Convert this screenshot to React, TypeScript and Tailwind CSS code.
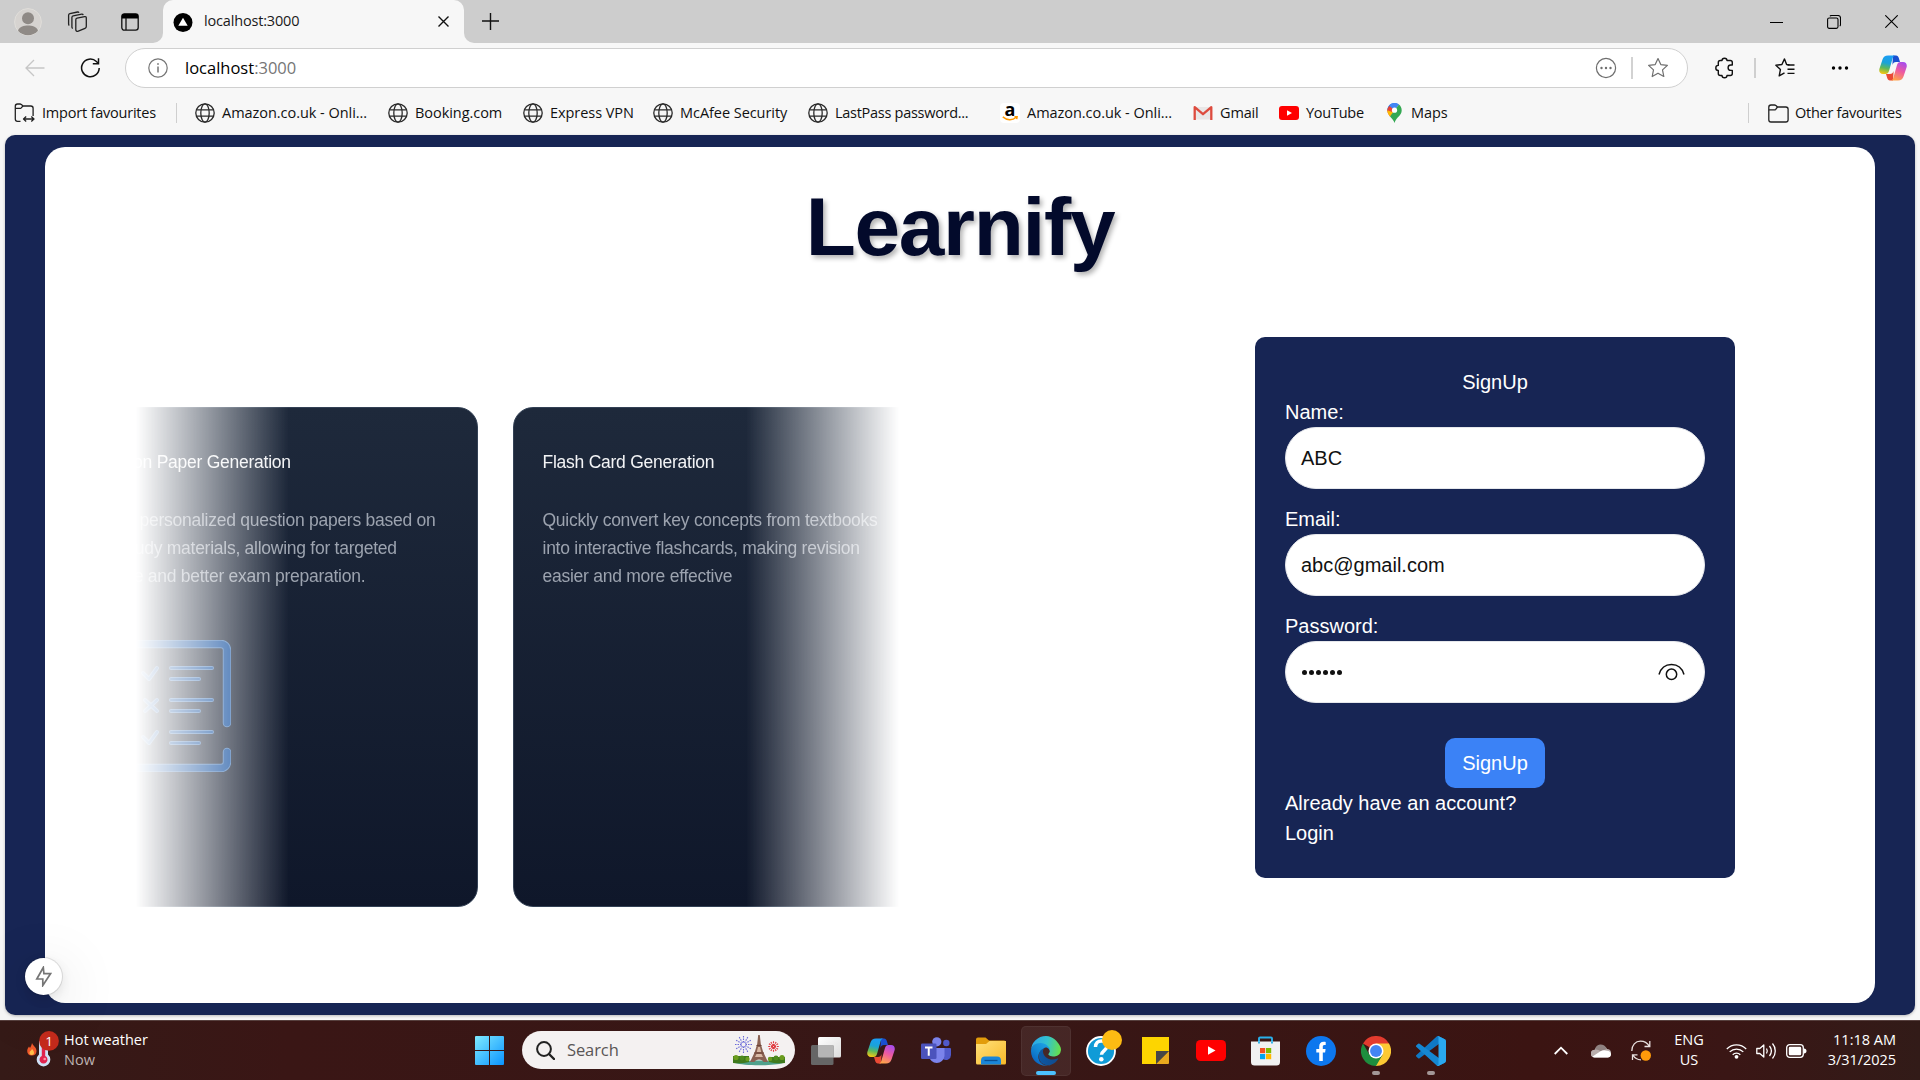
import type { ReactNode } from "react";

const ui = "font-['Open_Sans','Noto_Sans',sans-serif]";

/* ---------- shared drawings ---------- */

function Globe() {
  return (
    <svg width="20" height="20" viewBox="0 0 20 20" fill="none" stroke="#2a2a2a" strokeWidth="1.3">
      <circle cx="10" cy="10" r="9.200" />
      <ellipse cx="10" cy="10" rx="4.200" ry="9.200" />
      <path d="M1.600 6.800h16.800M1.600 13.200h16.800" />
    </svg>
  );
}

function Copilot({ id }: { id: string }) {
  return (
    <svg width="28" height="26" viewBox="0 0 28 26">
      <defs>
        <linearGradient id={id + "a"} x1="0.5" y1="0" x2="0.3" y2="1">
          <stop offset="0" stopColor="#1b9df5" />
          <stop offset=".4" stopColor="#1aa3d8" />
          <stop offset=".68" stopColor="#5cb85c" />
          <stop offset="1" stopColor="#f6c712" />
        </linearGradient>
        <linearGradient id={id + "b"} x1="0.8" y1="0" x2="0.4" y2="1">
          <stop offset="0" stopColor="#a44cf0" />
          <stop offset=".5" stopColor="#ee5aa0" />
          <stop offset="1" stopColor="#ffa24c" />
        </linearGradient>
      </defs>
      <path d="M14 .5h3c1.600 0 2.300 1 2.800 2.500L21 7h-4c-2 0-3 1-3.600 3z" fill="#1a4fd0" />
      <path d="M14 25.500h-3c-1.600 0-2.300-1-2.800-2.500L7 19h4c2 0 3-1 3.600-3z" fill="#ea4a35" />
      <path d="M9 .5h7.500c-1.500 0-2.300 1-2.800 2.500L10 16c-.6 2-1.600 3-3.500 3H4c-3.200 0-4.400-2.500-3.500-5.500l3-9C4.400 1.900 6 .5 9 .5z" fill={`url(#${id}a)`} />
      <path d="M19 25.500h-7.500c1.500 0 2.300-1 2.800-2.500L18 10c.6-2 1.600-3 3.500-3H24c3.200 0 4.400 2.500 3.500 5.500l-3 9c-.9 2.600-2.500 4-5.500 4z" fill={`url(#${id}b)`} />
    </svg>
  );
}

/* ---------- browser chrome ---------- */

function TabStrip() {
  return (
    <div className="flex h-[43px] bg-[#f7f7f7]">
      <div className="flex w-[163px] items-center rounded-br-[10px] bg-[#cdcdcd] pl-[14px]">
        <svg width="28" height="28" viewBox="0 0 28 28">
          <circle cx="14" cy="14" r="13.400" fill="#d6d3d0" stroke="#e0deda" />
          <circle cx="14" cy="10.200" r="6" fill="#8f8a86" />
          <path d="M4 22.800c1.500-4.500 6-5.300 10-5.300s8.500.8 10 5.300a13.400 13.400 0 0 1-20 0z" fill="#8f8a86" />
        </svg>
        <svg className="ml-[25px]" width="21" height="22" viewBox="0 0 20 22" fill="none" stroke="#222" strokeWidth="1.300" strokeLinejoin="round">
          <path d="M8.300 8.800c0-1 .5-1.500 1.300-1.700l7.500-1.500c1-.2 1.700.4 1.700 1.400v8.500c0 1-.4 1.600-1.300 1.900l-6.700 2.800c-1.300.5-2.500-.2-2.500-1.500z" />
          <path d="M5.300 17.500c-.7-.3-.9-.8-.9-1.500V6.600c0-1 .5-1.500 1.300-1.700l8.500-1.700c.8-.1 1.300.2 1.500.9" />
          <path d="M1.800 14.500c-.5-.3-.7-.8-.7-1.500V4.300c0-1 .5-1.500 1.300-1.700L10 1c.7-.1 1.200.1 1.500.7" />
        </svg>
        <svg className="ml-[33px]" width="18" height="18" viewBox="0 0 18 18">
          <rect x=".8" y=".8" width="16.400" height="16.400" rx="2.600" fill="none" stroke="#111" strokeWidth="1.300" />
          <path d="M.8 5.500V3.200C.8 1.800 1.800.8 3.200.8h11.600c1.400 0 2.400 1 2.400 2.400v2.300z" fill="#000" />
          <path d="M5 5v12" stroke="#111" strokeWidth="1.300" />
        </svg>
      </div>
      <div className="w-[301px] bg-[#cdcdcd]">
        <div className="flex h-full items-center rounded-t-[10px] bg-[#f7f7f7] pl-[10px]">
          <svg width="20" height="20" viewBox="0 0 20 20">
            <circle cx="10" cy="10.500" r="9.500" fill="#000" />
            <path d="M10 5.700l4.700 8H5.300z" fill="#fff" />
          </svg>
          <span className={`${ui} ml-[11px] w-[190px] pb-px text-[14.500px] leading-5 tracking-[-0.17px] text-[#1a1a1a]`}>localhost:3000</span>
          <svg className="ml-[44px]" width="11" height="11" viewBox="0 0 11 11" stroke="#111" strokeWidth="1.400">
            <path d="M.5.500l10 10M10.500.500l-10 10" />
          </svg>
        </div>
      </div>
      <div className="flex flex-1 items-center rounded-bl-[10px] bg-[#cdcdcd] pl-[18px] pr-[22px]">
        <svg width="17" height="17" viewBox="0 0 17 17" stroke="#111" strokeWidth="1.400">
          <path d="M0 8h17M8.500 0v17" />
        </svg>
        <div className="flex-1" />
        <svg width="13" height="14" viewBox="0 0 13 14">
          <path d="M0 7.500h13" stroke="#000" />
        </svg>
        <svg className="ml-[44px]" width="14" height="14" viewBox="0 0 14 14" fill="none" stroke="#000" strokeWidth="1.100">
          <rect x=".6" y="3" width="10.400" height="10.400" rx="1.600" />
          <path d="M3 1.200C3.300.700 3.800.5 4.500.5H11c1.700 0 2.500.8 2.500 2.500v6.500c0 .8-.2 1.300-.8 1.600" />
        </svg>
        <svg className="ml-[44px]" width="13" height="13" viewBox="0 0 13 13" stroke="#000" strokeWidth="1.100">
          <path d="M.3.300l12.400 12.400M12.700.300L.3 12.700" />
        </svg>
      </div>
    </div>
  );
}

function AddressRow() {
  return (
    <div className="flex h-[50px] items-center">
      <svg className="ml-[25px]" width="20" height="18" viewBox="0 0 20 18" fill="none" stroke="#c6c6c6" strokeWidth="1.300">
        <path d="M19.500 9H1M9 1L1 9l8 8" />
      </svg>
      <svg className="ml-[35px]" width="21" height="20" viewBox="0 0 20 20" fill="none" stroke="#111" strokeWidth="1.500">
        <path d="M18.700 10a8.800 8.800 0 1 1-2.800-6.500L17.700 5.200" />
        <path d="M18 .2v5.600h-5.700" />
      </svg>
      <div className="ml-[24px] flex h-[40px] w-[1563px] items-center rounded-full border border-[#d0d0d0] bg-white">
        <svg className="ml-[22px]" width="20" height="20" viewBox="0 0 20 20" fill="none" stroke="#757575" strokeWidth="1.200">
          <circle cx="10" cy="10" r="9.200" />
          <path d="M10 8.500v6" strokeWidth="1.500" />
          <path d="M10 5.200v1.600" strokeWidth="1.700" />
        </svg>
        <span className={`${ui} ml-[17px] pb-px text-[16.500px] leading-6 text-black`}>
          localhost<span className="text-[#767676]">:3000</span>
        </span>
        <div className="flex-1" />
        <svg width="22" height="22" viewBox="0 0 22 22" fill="none" stroke="#6e6e6e" strokeWidth="1.200">
          <circle cx="11" cy="11" r="9.600" />
          <g fill="#6e6e6e" stroke="none">
            <circle cx="6.500" cy="11" r="1.200" />
            <circle cx="11" cy="11" r="1.200" />
            <circle cx="15.500" cy="11" r="1.200" />
          </g>
        </svg>
        <div className="ml-[14px] h-[22px] w-[2px] bg-[#d2d2d2]" />
        <svg className="ml-[14px] mr-[18px]" width="22" height="22" viewBox="0 0 22 22" fill="none" stroke="#6e6e6e" strokeWidth="1.200" strokeLinejoin="round">
          <path d="M11 1.500l2.800 6.100 6.600.8-4.900 4.500 1.300 6.600L11 16.200l-5.800 3.300 1.300-6.600L1.600 8.400l6.600-.8z" />
        </svg>
      </div>
      <svg className="ml-[27px]" width="19" height="22" viewBox="0 0 19 22" fill="none" stroke="#111" strokeWidth="1.400" strokeLinejoin="round">
        <path d="M7 3.500C7 2.200 8.100 1.300 9.500 1.300s2.500.9 2.500 2.200h3.300c1.200 0 2 .8 2 2V8h-1.500a2.600 2.600 0 0 0 0 5.400h1.500v3.100c0 1.200-.8 2-2 2H12c0 1.300-1.100 2.200-2.500 2.200S7 19.800 7 18.500H5.300c-1.200 0-2-.8-2-2v-3C1.800 13.500.8 12.300.8 11S1.800 8.400 3.300 8.400V5.500c0-1.200.8-2 2-2z" />
      </svg>
      <div className="ml-[20px] h-[20px] w-[2px] bg-[#cfcfcf]" />
      <svg className="ml-[18px]" width="22" height="22" viewBox="0 0 22 22" fill="none" stroke="#111" strokeWidth="1.400" strokeLinejoin="round">
        <path d="M15.500 7.800l-2.900-.3L10.500 1.900 7.900 7.500l-6 .8 4.500 4.300-1.200 6.300 5.300-3" />
        <path d="M13.500 8h7M13.500 12.200h7M13.500 16.400h7" />
      </svg>
      <svg className="ml-[35px]" width="18" height="6" viewBox="0 0 18 6">
        <circle cx="2.500" cy="3" r="1.700" />
        <circle cx="9" cy="3" r="1.700" />
        <circle cx="15.500" cy="3" r="1.700" />
      </svg>
      <div className="ml-[30px]"><Copilot id="top" /></div>
    </div>
  );
}

function Bookmark({ icon, label, width, tracking }: { icon: ReactNode; label: string; width: string; tracking: string }) {
  return (
    <div className={`flex shrink-0 items-center ${width}`}>
      <span className="flex w-[20px] justify-center">{icon}</span>
      <span className={`${ui} ml-[7px] whitespace-nowrap text-[14.500px] leading-5 text-[#111] ${tracking}`}>{label}</span>
    </div>
  );
}

function AmazonMark() {
  return (
    <span className="flex h-[20px] w-[20px] flex-col items-center rounded-[4px] bg-white">
      <span className="font-['Open_Sans',sans-serif] text-[18px] font-bold leading-[13px] text-black">a</span>
      <svg width="16" height="5" viewBox="0 0 16 5" fill="none" stroke="#ff9900" strokeWidth="1.500">
        <path d="M.8.900C5 4.500 10.500 4.500 14.300 1.300M12.500.800l2.600-.1-.4 2.500" />
      </svg>
    </span>
  );
}

function GmailMark() {
  return (
    <svg width="20" height="16" viewBox="0 0 20 16">
      <path d="M2 2h16v12.500H2z" fill="#e9e7e7" />
      <path d="M1.700 15V2.200L10 9.200l8.300-7V15" fill="none" stroke="#dd4b3e" strokeWidth="2.300" strokeLinejoin="round" />
    </svg>
  );
}

function YouTubeMark({ w, h }: { w: number; h: number }) {
  return (
    <svg width={w} height={h} viewBox="0 0 30 21">
      <rect width="30" height="21" rx="4.500" fill="#f00" />
      <path d="M12 6.300l7.500 4.200-7.500 4.200z" fill="#fff" />
    </svg>
  );
}

function MapsMark() {
  return (
    <svg width="15" height="20" viewBox="0 0 15 20">
      <path d="M7.500 0C3.400 0 .3 3.200.3 7.200l3.900 4.500L11.800 1.500C10.600.5 9.200 0 7.500 0z" fill="#1a73e8" />
      <path d="M.3 7.200C.3 9.800 1.600 11.600 3 13.400l6.200-7.500L3.500 2.200C1.600 3.500.3 5 .3 7.200z" fill="#ea4335" />
      <path d="M7.500 0c1.800 0 3.200.6 4.400 1.500L7.300 7 2.200 2.800C3.500 1 5.300 0 7.500 0z" fill="#4285f4" />
      <path d="M.3 7.300c0 2.300 1.200 4.300 2.700 6.100l6.500-7.600-2 4z" fill="#fbbc04" />
      <path d="M11.900 1.500c1.700 1.300 2.800 3.400 2.800 5.700 0 5.500-5.500 6.800-7.200 12.800-.8-3-2.700-4.500-4.500-6.600z" fill="#34a853" />
      <circle cx="7.500" cy="7.200" r="2.600" fill="#fff" />
    </svg>
  );
}

function FolderOutline() {
  return (
    <svg width="21" height="19" viewBox="0 0 21 19" fill="none" stroke="#222" strokeWidth="1.300" strokeLinejoin="round">
      <path d="M.8 3.200C.8 1.800 1.600 1 3 1h3.500c.6 0 1 .2 1.400.6L9.500 3h8.300c1.400 0 2.300.8 2.300 2.200v10.500c0 1.400-.9 2.300-2.300 2.300H3c-1.400 0-2.200-.9-2.200-2.300z" />
      <path d="M.8 5.900h5.500c.6 0 1-.2 1.400-.5L9.500 3" />
    </svg>
  );
}

function BookmarkRow() {
  return (
    <div className="flex h-[42px] items-center pb-[2px] pl-[14px]">
      <div className="flex w-[162px] items-center">
        <svg width="22" height="20" viewBox="0 0 21 20" fill="none" stroke="#222" strokeWidth="1.300" strokeLinejoin="round">
          <path d="M6 18.300H3c-1.400 0-2.200-.9-2.200-2.300V3.200C.8 1.800 1.600 1 3 1h2.500c.6 0 1 .2 1.400.6L8.500 3h7.800c1.400 0 2.300.8 2.300 2.200V13" />
          <path d="M.8 5.400h4.500c.6 0 1-.2 1.400-.5L8.500 3M9.500 16h9.500M11.700 13.500L9 16l2.700 2.500M16.800 13.500l2.700 2.500-2.700 2.500" />
        </svg>
        <span className={`${ui} ml-[6px] whitespace-nowrap text-[14.500px] leading-5 tracking-[-0.21px] text-[#111]`}>Import favourites</span>
      </div>
      <div className="mr-[18px] h-[20px] w-px bg-[#cfcfcf]" />
      <Bookmark icon={<Globe />} label="Amazon.co.uk - Onli..." width="w-[193px]" tracking="tracking-[-0.04px]" />
      <Bookmark icon={<Globe />} label="Booking.com" width="w-[135px]" tracking="tracking-[-0.05px]" />
      <Bookmark icon={<Globe />} label="Express VPN" width="w-[130px]" tracking="tracking-[-0.05px]" />
      <Bookmark icon={<Globe />} label="McAfee Security" width="w-[155px]" tracking="tracking-[-0.05px]" />
      <Bookmark icon={<Globe />} label="LastPass password..." width="w-[192px]" tracking="tracking-[-0.28px]" />
      <Bookmark icon={<AmazonMark />} label="Amazon.co.uk - Onli..." width="w-[193px]" tracking="tracking-[-0.04px]" />
      <Bookmark icon={<GmailMark />} label="Gmail" width="w-[86px]" tracking="tracking-[-0.15px]" />
      <Bookmark icon={<YouTubeMark w={20} h={14} />} label="YouTube" width="w-[105px]" tracking="tracking-[-0.25px]" />
      <Bookmark icon={<MapsMark />} label="Maps" width="w-[100px]" tracking="tracking-[-0.1px]" />
      <div className="flex-1" />
      <div className="h-[20px] w-px bg-[#cfcfcf]" />
      <div className="ml-[19px] flex w-[152px] items-center">
        <FolderOutline />
        <span className={`${ui} ml-[6px] whitespace-nowrap text-[14.500px] leading-5 tracking-[-0.26px] text-[#111]`}>Other favourites</span>
      </div>
    </div>
  );
}

/* ---------- page content ---------- */

const paperFrame = "M128 83V10a6 6 0 0 0-6-6H10a6 6 0 0 0-6 6v112a6 6 0 0 0 6 6h112a6 6 0 0 0 6-6v-10";
const paperRows = "M72 28h41M72 39h28M72 60h41M72 71h28M72 92h41M72 103h28M44 33l6 6 8-11M46 60l12 11M58 60L46 71M44 97l6 6 8-11";

function PaperIcon() {
  return (
    <svg width="132" height="132" viewBox="0 0 132 132" fill="none" strokeLinecap="round" strokeLinejoin="round">
      <g stroke="#4478b8">
        <path d={paperFrame} strokeWidth="8.500" />
        <path d={paperRows} strokeWidth="4" />
      </g>
      <g stroke="#054599">
        <path d={paperFrame} strokeWidth="6.500" />
        <path d={paperRows} strokeWidth="2.200" />
      </g>
    </svg>
  );
}

function FeatureCard({ title, lines, children }: { title: string; lines: string[]; children?: ReactNode }) {
  return (
    <div className="h-[500px] w-[424px] shrink-0 rounded-[20px] border border-[#334155] bg-[linear-gradient(180deg,#1e293b,#0f172a)] px-[29px] py-[40px] text-[17.500px] leading-[28px]">
      <div className="whitespace-nowrap tracking-[-0.25px] text-[#f3f4f6]">{title}</div>
      <div className="mt-[30px] tracking-[-0.26px] text-[#9ca3af]">
        {lines.map((l) => (
          <div key={l} className="whitespace-nowrap">{l}</div>
        ))}
      </div>
      {children}
    </div>
  );
}

function Cards() {
  return (
    <div className="flex w-[763px] justify-start overflow-hidden [mask-image:linear-gradient(to_right,transparent,#fff_20%,#fff_80%,transparent)]">
      <div className="ml-[-82px] flex gap-[34.5px]">
        <FeatureCard
          title="Question Paper Generation"
          lines={["Create personalized question papers based on", "your study materials, allowing for targeted", "practice and better exam preparation."]}
        >
          <div className="ml-[15px] mt-[50px]"><PaperIcon /></div>
        </FeatureCard>
        <FeatureCard
          title="Flash Card Generation"
          lines={["Quickly convert key concepts from textbooks", "into interactive flashcards, making revision", "easier and more effective"]}
        />
      </div>
    </div>
  );
}

function Field({ label, children }: { label: string; children: ReactNode }) {
  return (
    <div>
      <div>{label}</div>
      <div className="flex h-[62px] items-center rounded-full border border-[#e5e7eb] bg-white px-[15px] text-[#111]">{children}</div>
    </div>
  );
}

function SignUpForm() {
  return (
    <div className="flex w-[480px] flex-col rounded-[10px] bg-[#172554] p-[30px] text-[20px] leading-[30px] text-white">
      <div className="text-center">SignUp</div>
      <div className="flex flex-col gap-[15px]">
        <Field label="Name:">ABC</Field>
        <Field label="Email:">abc@gmail.com</Field>
        <Field label="Password:">
          <span className="flex gap-[2px] pl-px">
            {[0, 1, 2, 3, 4, 5].map((n) => (
              <span key={n} className="h-[5px] w-[5px] rounded-full bg-[#111]" />
            ))}
          </span>
          <span className="flex-1" />
          <svg className="mr-[4px]" width="27" height="18" viewBox="0 0 27 18" fill="none" stroke="#111" strokeWidth="1.500">
            <path d="M1 11.500C3 4.800 8 1.500 13.500 1.500S24 4.800 26 11.500" />
            <circle cx="13.500" cy="11.300" r="5.200" />
          </svg>
        </Field>
      </div>
      <button className="mt-[35px] h-[50px] w-[100px] self-center rounded-[10px] bg-[#3b82f6] text-center">SignUp</button>
      <div>Already have an account?</div>
      <div>Login</div>
    </div>
  );
}

function Page() {
  return (
    <div className="relative mx-[5px] h-[880px] rounded-[10px] bg-[#172554] px-[40px] py-[12px] font-['Liberation_Sans',Arial,sans-serif] shadow-[0_1px_3px_rgba(0,0,0,0.25)]">
      <div className="flex h-[856px] flex-col items-center rounded-[20px] bg-white">
        <h1 className="mt-[30px] h-[100px] text-[82px] font-bold leading-[99px] tracking-[-1.3px] text-[#030a2b] [text-shadow:2.5px_2.5px_5px_rgba(0,0,0,0.3)]">Learnify</h1>
        <div className="mt-[60px] flex w-full items-start pl-[91px]">
          <div className="mt-[70px]"><Cards /></div>
          <div className="ml-[356px]"><SignUpForm /></div>
        </div>
      </div>
      <div className="absolute bottom-[20px] left-[20px] flex h-[37px] w-[37px] items-center justify-center rounded-full bg-white shadow-[0_0_0_1px_rgba(0,0,0,0.1),0_4px_12px_rgba(0,0,0,0.1),0_12px_60px_rgba(0,0,0,0.18)]">
        <svg width="17" height="21" viewBox="0 0 17 21" fill="none" stroke="#757575" strokeWidth="1.700">
          <path d="M8.300 1.500L1.800 13h6v6.500L15.500 7.700H8.900z" />
        </svg>
      </div>
    </div>
  );
}

/* ---------- taskbar ---------- */

function Weather() {
  return (
    <div className="flex w-[448px] items-center pb-[2px] pl-[26px]">
      <svg width="34" height="38" viewBox="0 0 34 38">
        <path d="M6 12c1 3 4.500 4 4.500 8 0 3-2 4.500-4.800 4.500S1.200 22.500 1.200 20c0-2 1-3 1.800-4.500l1 1.500c1-1.500 1.500-3 2-5z" fill="#f0592b" />
        <path d="M6 18c1 1.200 2 2.200 2 3.800 0 1.400-1 2.200-2.200 2.200s-2.300-.8-2.300-2.200c0-1.400 1.700-2 2.500-3.800z" fill="#ffc04a" />
        <path d="M13 10h9v13.500a6.800 6.800 0 1 1-9 0z" fill="#cfe2f7" />
        <path d="M15.800 12h3.400v13a4 4 0 1 1-3.400 0z" fill="#e0234e" />
        <circle cx="18.700" cy="28" r="1.300" fill="#ff8fa8" />
        <circle cx="23" cy="9.900" r="9.900" fill="#c42b1c" />
        <text x="23" y="14.700" textAnchor="middle" fontFamily="Open Sans" fontSize="13.500" fill="#fff">1</text>
      </svg>
      <div className={`${ui} ml-[4px] text-[14.500px] leading-[20px] text-white`}>
        <div>Hot weather</div>
        <div className="text-[#bdb2b1]">Now</div>
      </div>
    </div>
  );
}

function EiffelArt() {
  const rays = [0, 30, 60, 90, 120, 150, 180, 210, 240, 270, 300, 330];
  return (
    <svg width="52" height="31" viewBox="0 0 52 31">
      <g stroke="#6a6ad8" strokeWidth="1.100" strokeDasharray="1.500 1">
        {rays.map((a) => <path key={a} d="M10.500 7.500V1" transform={`rotate(${a} 10.500 9.500)`} />)}
      </g>
      <g stroke="#e0393e" strokeWidth="1.100" strokeDasharray="2 .8">
        {rays.map((a) => <path key={a} d="M40.500 11V5.800" transform={`rotate(${a} 40.500 11.500)`} />)}
      </g>
      <path d="M2 28c8-3.500 40-3.500 48 0-9 3-39 3-48 0z" fill="#4fa08b" />
      <path d="M0 21h16v6c-5 1.500-11 1.500-16 1zM36 22h16v6c-5 .5-11 .5-16-1z" fill="#3f7a1d" />
      <circle cx="3" cy="22.500" r="2.600" fill="#6b9c1f" />
      <circle cx="9" cy="23" r="2.400" fill="#4e8a1e" />
      <circle cx="14.500" cy="24" r="2.200" fill="#6b9c1f" />
      <circle cx="37" cy="24" r="2.200" fill="#6b9c1f" />
      <circle cx="43" cy="23" r="2.400" fill="#4e8a1e" />
      <circle cx="49" cy="22.500" r="2.600" fill="#6b9c1f" />
      <path d="M25.200 0h1.600l1 9 2.400 8 4.800 10h-4.500c-1-3.500-8-3.500-9 0H17l4.800-10 2.400-8z" fill="#8a6152" />
      <path d="M25 12h2l1.200 5h-4.400zM23.500 19h5l1.500 3h-8z" fill="#d9b9a5" />
      <path d="M21 18h10M23.500 10.500h5" stroke="#6e4436" />
    </svg>
  );
}

function SearchBox() {
  return (
    <div className="ml-[18px] mt-[-1px] flex h-[38px] w-[273px] items-center rounded-full bg-[#f4f1f1] pl-[14px] pr-[10px]">
      <svg width="19" height="19" viewBox="0 0 19 19" fill="none" stroke="#222" strokeWidth="2">
        <circle cx="8" cy="8" r="6.900" />
        <path d="M13 13l5 5" strokeWidth="2.400" strokeLinecap="round" />
      </svg>
      <span className={`${ui} ml-[12px] flex-1 text-[16.500px] leading-6 tracking-[-0.1px] text-[#5a5656]`}>Search</span>
      <EiffelArt />
    </div>
  );
}

function AppCell({ children, active, running }: { children: ReactNode; active?: boolean; running?: boolean }) {
  return (
    <div className="flex w-[55px] justify-center">
      <div className={active ? "relative flex h-[50px] w-[50px] items-center justify-center rounded-[5px] border border-white/5 bg-white/[0.07]" : "relative flex h-[50px] w-[50px] items-center justify-center"}>
        {children}
        {active && <span className="absolute bottom-0 left-[14px] h-[4px] w-[20px] rounded-full bg-[#4cc2ff]" />}
        {running && <span className="absolute bottom-px left-[21px] h-[4px] w-[8px] rounded-full bg-[#a39797]" />}
      </div>
    </div>
  );
}

function TaskViewIcon() {
  return (
    <svg width="30" height="28" viewBox="0 0 30 28">
      <defs>
        <linearGradient id="tv" x1="0" y1="0" x2="1" y2="1"><stop stopColor="#fff" /><stop offset="1" stopColor="#dcdcdc" /></linearGradient>
      </defs>
      <rect x="7" y="0" width="23" height="20.500" rx="1.500" fill="url(#tv)" />
      <rect x="0" y="8" width="22.500" height="20" rx="1.500" fill="#666" />
      <path d="M7 8h15.500v12.500H8.500A1.500 1.500 0 0 1 7 19z" fill="#b5b5b5" />
    </svg>
  );
}

function TeamsIcon() {
  return (
    <svg width="30" height="28" viewBox="0 0 30 28">
      <circle cx="25.300" cy="6" r="3.200" fill="#5059c9" />
      <circle cx="15.800" cy="4.800" r="4.600" fill="#7b83eb" />
      <path d="M20 11h9a1 1 0 0 1 1 1v6a5 5 0 0 1-8 4z" fill="#5059c9" />
      <path d="M8 11h15.500v8a7.800 7.800 0 0 1-15.500 0z" fill="#7b83eb" />
      <rect x="0" y="6.500" width="15.500" height="15.500" rx="1.300" fill="#4b53bc" />
      <path d="M4 10.500h7.500M7.750 10.500v8.300" stroke="#fff" strokeWidth="2" />
    </svg>
  );
}

function FolderIcon() {
  return (
    <svg width="30" height="28" viewBox="0 0 30 28">
      <defs><linearGradient id="fo" x1="0" y1="0" x2="1" y2="1"><stop stopColor="#ffe07a" /><stop offset="1" stopColor="#f9b928" /></linearGradient></defs>
      <path d="M0 2.500A2 2 0 0 1 2 .5h7.500l3.500 3h15a2 2 0 0 1 2 2V12H0z" fill="#e29c0b" />
      <path d="M0 7h10l3.500-3H30v22a1.500 1.500 0 0 1-1.500 1.500h-27A1.500 1.500 0 0 1 0 26z" fill="url(#fo)" />
      <path d="M5 27.500v-4a4 4 0 0 1 4-4h12a4 4 0 0 1 4 4v4z" fill="#1a86d9" />
      <path d="M8.500 23.500h13" stroke="#0a4f93" strokeWidth="1.300" />
    </svg>
  );
}

function EdgeIcon() {
  return (
    <svg width="30" height="30" viewBox="0 0 256 256">
      <defs>
        <linearGradient id="e1" x1="58" y1="177" x2="237" y2="177" gradientUnits="userSpaceOnUse"><stop stopColor="#0c59a4" /><stop offset="1" stopColor="#114a8b" /></linearGradient>
        <linearGradient id="e2" x1="152" y1="98" x2="40" y2="220" gradientUnits="userSpaceOnUse"><stop stopColor="#1b9de2" /><stop offset=".5" stopColor="#1387d2" /><stop offset="1" stopColor="#0a66c2" /></linearGradient>
        <linearGradient id="e3" x1="10" y1="60" x2="250" y2="110" gradientUnits="userSpaceOnUse"><stop stopColor="#2ba6e8" /><stop offset=".5" stopColor="#33c2cf" /><stop offset="1" stopColor="#66e04c" /></linearGradient>
      </defs>
      <path d="M231 190c-3 2-7 3-11 5-11 4-23 6-34 6-45 0-84-31-84-71 0-11 6-21 16-26-40 2-51 44-51 69 0 70 64 77 78 77 8 0 19-2 26-5 26-8 48-26 61-50 1-3-1-6-1-5z" fill="url(#e1)" />
      <path d="M106 241a79 79 0 0 1-23-21 81 81 0 0 1 35-116c3-2 9-5 16-5 11 0 21 5 27 13a33 33 0 0 1 7 19c0-1 25-80-80-80C44 51 8 93 8 130c0 18 4 35 11 51a128 128 0 0 0 156 66c-23 8-48 5-69-6z" transform="translate(-8 0)" fill="url(#e2)" />
      <path d="M152 149c-1 1-4 3-4 6 0 3 2 6 6 9 16 12 48 10 48 10a62 62 0 0 0 54-54c0-19-7-31-10-37C227 46 186 0 128 0A128 128 0 0 0 0 126c1-37 37-66 80-66 4 0 24 0 43 10 16 9 25 19 31 29 6 11 7 25 7 30s-3 13-9 20z" fill="url(#e3)" />
    </svg>
  );
}

function HelpIcon() {
  return (
    <span className="relative flex">
      <svg width="30" height="30" viewBox="0 0 30 30">
        <circle cx="15" cy="15" r="14" fill="#0f9bd7" stroke="#fff" strokeWidth="1.800" />
        <path d="M9.500 11c0-4 2.500-6 5.800-6 3.500 0 5.700 2 5.700 4.800 0 4.700-5.500 4.700-5.500 9" fill="none" stroke="#fff" strokeWidth="3.500" />
        <circle cx="15.300" cy="23.300" r="2.300" fill="#fff" />
      </svg>
      <span className="absolute left-[16px] top-[-6px] h-[20px] w-[20px] rounded-full bg-[#fdbb13]" />
    </span>
  );
}

function StickyIcon() {
  return (
    <svg width="27" height="27" viewBox="0 0 27 27">
      <path d="M0 0h27v14L14 27H0z" fill="#fdd500" />
      <path d="M14 27h12a1 1 0 0 0 1-1V14z" fill="#e9a91e" />
      <path d="M14 14h13L14 27z" fill="#474747" />
    </svg>
  );
}

function StoreIcon() {
  return (
    <svg width="29" height="30" viewBox="0 0 29 30">
      <path d="M8 7V2.500A1 1 0 0 1 9 1.500h11a1 1 0 0 1 1 1V7" fill="none" stroke="#29b0ea" strokeWidth="1.900" />
      <path d="M0 5.500h29V26a3.500 3.500 0 0 1-3.500 3.500h-22A3.500 3.500 0 0 1 0 26z" fill="#f1f1f1" />
      <path d="M9 12h5.200v5.200H9z" fill="#f25022" />
      <path d="M15 12h5.200v5.200H15z" fill="#7fba00" />
      <path d="M9 18h5.200v5.200H9z" fill="#00a4ef" />
      <path d="M15 18h5.200v5.200H15z" fill="#ffb900" />
      <path d="M8 5.500V7.500M21 5.500V7.500" stroke="#29b0ea" strokeWidth="1.900" />
    </svg>
  );
}

function FacebookIcon() {
  return (
    <svg width="30" height="30" viewBox="0 0 30 30">
      <circle cx="15" cy="15" r="15" fill="#0d77ee" />
      <path d="M13.200 25v-8.500H10.300v-3.600h2.900v-2.300c0-3 1.700-4.800 4.500-4.800 1 0 2 .2 2 .2v3h-1.300c-1.300 0-1.600.8-1.600 1.600v2.300h2.800l-.5 3.600h-2.300V25z" fill="#fff" />
    </svg>
  );
}

function ChromeIcon() {
  return (
    <svg width="30" height="30" viewBox="0 0 48 48">
      <path d="M24 24L3.200 12A24 24 0 0 1 44.800 12L44 13H24z" fill="#e33b2e" />
      <path d="M24 12h20.800A24 24 0 0 1 24 48l-1-1 11.400-17z" fill="#fcc934" />
      <path d="M13.600 30L3.200 12A24 24 0 0 0 24 48l10.400-18z" fill="#1e8e3e" />
      <circle cx="24" cy="24" r="12" fill="#fff" />
      <circle cx="24" cy="24" r="9.500" fill="#4285f4" />
    </svg>
  );
}

function VSCodeIcon() {
  return (
    <svg width="30" height="30" viewBox="0 0 100 100">
      <path d="M96 11L76 1a6 6 0 0 0-7 1L1.500 63a4 4 0 0 0 0 6L7 74a4 4 0 0 0 5 0L94 13c2.500-2 6 0 6 3z" fill="#0f78c4" />
      <path d="M96 89L76 99a6 6 0 0 1-7-1L1.500 37a4 4 0 0 1 0-6L7 26a4 4 0 0 1 5 0l82 61c2.500 2 6 0 6-3z" fill="#1587d2" />
      <path d="M76 99a6 6 0 0 1-7-1c2 2 6 .5 6-3V5c0-3.500-4-5-6-3a6 6 0 0 1 7-1l20 10a6 6 0 0 1 4 5.500v67a6 6 0 0 1-4 5.500z" fill="#2aa8ef" />
    </svg>
  );
}

function Tray() {
  return (
    <div className={`${ui} flex w-[366px] items-center text-[14.500px] leading-[20px] text-white`}>
      <svg width="14" height="9" viewBox="0 0 14 9" fill="none" stroke="#fff" strokeWidth="1.800"><path d="M.7 8L7 1.700 13.300 8" /></svg>
      <svg className="ml-[23px]" width="20" height="14" viewBox="0 0 20 14">
        <path d="M3.500 13.500a3.900 3.900 0 0 1 .2-7.800A6.800 6.800 0 0 1 16 5a4.300 4.300 0 0 1 .8 8.500z" fill="#b9aead" />
        <path d="M3.700 5.700C6 5.300 8 6.200 9.500 7.300L16 5C14.500 1.500 11.500.2 9 .5 6.500.8 4.500 2.800 3.700 5.700z" fill="#8f8281" />
        <path d="M1.500 12.500l8-5.200c2-1.300 4-1.500 6.300-.6 2.500 0 4.200 1.700 4.200 3.500 0 2-1.500 3.300-3.200 3.300H3.500c-.8 0-1.500-.4-2-1z" fill="#fff" />
      </svg>
      <svg className="ml-[20px]" width="20" height="21" viewBox="0 0 20 21" fill="none" stroke="#e8e0df" strokeWidth="1.300">
        <path d="M.8 11C.8 5 4.500 1.200 9.500 1.200c4 0 7 2 8.800 5M18.800 1v5.500h-5.300" />
        <path d="M1.500 20v-5.200h5M2 15c1.500 2.800 4.500 4.800 8 4.800" />
        <circle cx="14.800" cy="15.500" r="5.200" fill="#ff9a0a" stroke="none" />
      </svg>
      <div className="ml-[20px] w-[36px] pb-[2px] text-center">
        <div>ENG</div>
        <div>US</div>
      </div>
      <svg className="ml-[19px]" width="21" height="16" viewBox="0 0 21 16" fill="none" stroke="#fff" strokeWidth="1.300">
        <path d="M.8 6a13.500 13.500 0 0 1 19.400 0M3.700 8.900a9.500 9.500 0 0 1 13.600 0M6.700 11.700a5.400 5.400 0 0 1 7.600 0" />
        <circle cx="10.500" cy="13.800" r="1.900" fill="#fff" stroke="none" />
      </svg>
      <svg className="ml-[9px]" width="21" height="18" viewBox="0 0 21 18" fill="none" stroke="#fff" strokeWidth="1.300" strokeLinejoin="round">
        <path d="M.8 6.500v5h3l4 3.500V3l-4 3.500z" />
        <path d="M10.500 6.500c1 1.600 1 3.400 0 5M13.500 4c2.300 3 2.300 7 0 10M16.500 1.500c3.700 4.300 3.700 10.700 0 15" />
      </svg>
      <svg className="ml-[9px]" width="21" height="14" viewBox="0 0 21 14">
        <rect x=".7" y=".7" width="16.600" height="12.600" rx="3" fill="none" stroke="#fff" strokeWidth="1.300" />
        <rect x="2.800" y="2.800" width="12.400" height="8.400" rx="1.200" fill="#fff" />
        <path d="M18 4.500c1.600.2 2.500 1 2.500 2.500s-.9 2.300-2.500 2.500z" fill="#fff" />
      </svg>
      <div className="ml-[14px] flex-1 pb-[2px] pr-[24px] text-right">
        <div>11:18 AM</div>
        <div className="tracking-[-0.05px]">3/31/2025</div>
      </div>
    </div>
  );
}

function Taskbar() {
  return (
    <div className="flex h-[60px] items-center border-t border-[#57403e] bg-[linear-gradient(90deg,#351a17_0%,#3a1615_15%,#371716_50%,#3b1412_80%,#3a1615_90%,#321b18_100%)]">
      <Weather />
      <svg className="ml-[27px]" width="29" height="29" viewBox="0 0 29 29">
        <defs><linearGradient id="win" x1="0" y1="0" x2="1" y2="1"><stop stopColor="#7feaff" /><stop offset="1" stopColor="#0a93ff" /></linearGradient></defs>
        <path d="M1 0h13v14H0V1a1 1 0 0 1 1-1zM15 0h13a1 1 0 0 1 1 1v13H15zM0 15h14v14H1a1 1 0 0 1-1-1zM15 15h14v13a1 1 0 0 1-1 1H15z" fill="url(#win)" />
      </svg>
      <SearchBox />
      <div className="ml-[3px] flex">
        <AppCell><TaskViewIcon /></AppCell>
        <AppCell><Copilot id="bar" /></AppCell>
        <AppCell><TeamsIcon /></AppCell>
        <AppCell><FolderIcon /></AppCell>
        <AppCell active><EdgeIcon /></AppCell>
        <AppCell><HelpIcon /></AppCell>
        <AppCell><StickyIcon /></AppCell>
        <AppCell><YouTubeMark w={30} h={21} /></AppCell>
        <AppCell><StoreIcon /></AppCell>
        <AppCell><FacebookIcon /></AppCell>
        <AppCell running><ChromeIcon /></AppCell>
        <AppCell running><VSCodeIcon /></AppCell>
      </div>
      <div className="flex-1" />
      <Tray />
    </div>
  );
}

export default function App() {
  return (
    <div className="flex h-[1080px] w-[1920px] flex-col overflow-hidden bg-[#f7f7f7]">
      <TabStrip />
      <AddressRow />
      <BookmarkRow />
      <Page />
      <div className="h-[5px] shrink-0" />
      <Taskbar />
    </div>
  );
}
